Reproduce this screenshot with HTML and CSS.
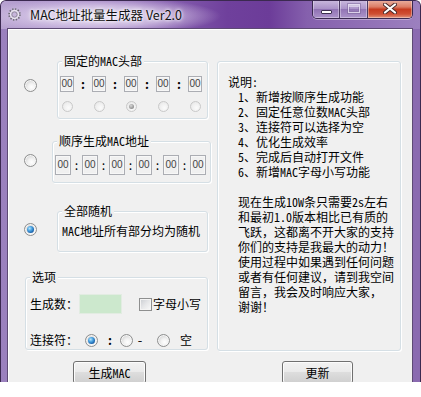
FILE: index.html
```html
<!DOCTYPE html>
<html lang="zh-CN">
<head>
<meta charset="utf-8">
<title>MAC地址批量生成器 Ver2.0</title>
<link rel="stylesheet" href="styles.css">
</head>
<body>
<div class="window">
  <div class="titlebar">
    <svg class="app-icon" width="13" height="13" viewBox="0 0 13 13">
      <circle cx="6.5" cy="6.5" r="5.2" fill="none" stroke="#6c6c72" stroke-width="2.2" stroke-dasharray="1.3 1.4"/>
      <circle cx="6.5" cy="6.5" r="4" fill="none" stroke="#e9e6ee" stroke-width="1.4"/>
      <circle cx="6.5" cy="6.5" r="2.6" fill="none" stroke="#8a8790" stroke-width="0.8"/>
    </svg>
    <span class="title">MAC地址批量生成器 Ver2.0</span>
    <div class="caption">
      <span class="cbtn cmin"><i></i></span>
      <span class="cbtn cmax"><i></i></span>
      <span class="cbtn cclose">
        <svg width="14" height="11" viewBox="0 0 14 11">
          <path d="M2 1.5 L12 9.5 M12 1.5 L2 9.5" stroke="#4a2a2a" stroke-width="4" stroke-linecap="round"/>
          <path d="M2 1.5 L12 9.5 M12 1.5 L2 9.5" stroke="#ffffff" stroke-width="2.2" stroke-linecap="round"/>
        </svg>
      </span>
    </div>
  </div>
  <div class="client">
    <div class="col-left">
      <div class="opt-row r1">
        <span class="radio"></span>
        <div class="grp g1">
          <span class="legend">固定的MAC头部</span>
          <div class="hex5">
            <div class="cell"><span class="box">00</span><span class="mini"></span></div>
            <span class="colon">:</span>
            <div class="cell"><span class="box">00</span><span class="mini"></span></div>
            <span class="colon">:</span>
            <div class="cell"><span class="box">00</span><span class="mini on"></span></div>
            <span class="colon">:</span>
            <div class="cell"><span class="box">00</span><span class="mini"></span></div>
            <span class="colon">:</span>
            <div class="cell"><span class="box">00</span><span class="mini"></span></div>
          </div>
        </div>
      </div>
      <div class="opt-row r2">
        <span class="radio"></span>
        <div class="grp g2">
          <span class="legend">顺序生成MAC地址</span>
          <div class="hex6">
            <span class="box">00</span><span class="colon">:</span>
            <span class="box">00</span><span class="colon">:</span>
            <span class="box">00</span><span class="colon">:</span>
            <span class="box">00</span><span class="colon">:</span>
            <span class="box">00</span><span class="colon">:</span>
            <span class="box">00</span>
          </div>
        </div>
      </div>
      <div class="opt-row r3">
        <span class="radio checked"></span>
        <div class="grp g3">
          <span class="legend">全部随机</span>
          <p class="g3-text">MAC地址所有部分均为随机</p>
        </div>
      </div>
      <div class="grp g4">
        <span class="legend">选项</span>
        <div class="form-row1">
          <span>生成数：</span>
          <span class="count-input"></span>
          <span class="checkbox"></span>
          <span class="cb-label">字母小写</span>
        </div>
        <div class="form-row2">
          <span>连接符：</span>
          <span class="radio checked sep-r1"></span>
          <span class="sep-colon">:</span>
          <span class="radio sep-r2"></span>
          <span class="sep-dash">-</span>
          <span class="radio sep-r3"></span>
          <span class="sep-empty">空</span>
        </div>
      </div>
    </div>
    <div class="grp desc">
      <div>说明:</div>
      <div class="ind">1、新增按顺序生成功能</div>
      <div class="ind">2、固定任意位数MAC头部</div>
      <div class="ind">3、连接符可以选择为空</div>
      <div class="ind">4、优化生成效率</div>
      <div class="ind">5、完成后自动打开文件</div>
      <div class="ind">6、新增MAC字母小写功能</div>
      <div class="blank"></div>
      <div class="ind">现在生成10W条只需要2s左右</div>
      <div class="ind">和最初1.0版本相比已有质的</div>
      <div class="ind">飞跃，这都离不开大家的支持</div>
      <div class="ind">你们的支持是我最大的动力！</div>
      <div class="ind">使用过程中如果遇到任何问题</div>
      <div class="ind">或者有任何建议，请到我空间</div>
      <div class="ind">留言，我会及时响应大家，</div>
      <div class="ind">谢谢！</div>
    </div>
    <div><button class="btn btn-mac">生成MAC</button></div>
    <div><button class="btn btn-upd">更新</button></div>
  </div>
</div>
</body>
</html>
```
FILE: styles.css
```css
body {
  margin: 0;
  background: #ffffff;
  font-family: "Noto Sans Mono CJK SC", "Noto Sans CJK SC", sans-serif;
  font-size: 12px;
  color: #000;
}

.window {
  width: 421px;
  height: 382px;
  box-sizing: border-box;
  border: 1px solid #3b2950;
  border-bottom: 0;
  border-radius: 6px 6px 0 0;
  padding: 0 8px 0 7px;
  background: linear-gradient(90deg, #9b81be 0%, #8c6bb3 50%, #8a6ab0 100%);
  display: flex;
  flex-direction: column;
  overflow: hidden;
}

.titlebar {
  height: 28px;
  flex: none;
  margin: 0 -8px 0 -7px;
  padding: 0 8px 0 7px;
  display: flex;
  align-items: flex-start;
  background:
    radial-gradient(ellipse 120px 19px at 100px 15px, rgba(240, 233, 248, 0.95) 0%, rgba(228, 216, 240, 0.65) 55%, rgba(228, 216, 240, 0) 100%),
    linear-gradient(90deg, #b8a3d1 0%, #a68ac7 16%, #8862b1 38%, #6f409c 54%, #6c3c99 64%, #8560ad 73%, #9c80bf 100%);
}

.app-icon {
  flex: none;
  margin-top: 7px;
}

.title {
  margin: 6px 0 0 9px;
  line-height: 16px;
  font-family: "Noto Sans CJK SC", sans-serif;
  font-size: 12.5px;
  color: #111;
  text-shadow: 0 0 5px #fff, 0 0 3px #fff;
}

.caption {
  margin: -1px -1px 0 auto;
  display: flex;
  height: 19px;
  box-sizing: border-box;
  border: 1px solid #3a2950;
  border-top: 0;
  border-radius: 0 0 5px 5px;
  overflow: hidden;
  box-shadow: 0 1px 0 rgba(255, 255, 255, 0.35);
}

.cbtn {
  display: flex;
  align-items: center;
  justify-content: center;
  height: 100%;
  box-shadow: inset 0 0 0 1px rgba(255, 255, 255, 0.35);
}

.cmin, .cmax {
  width: 26px;
  border-right: 1px solid #4b3a62;
  background: linear-gradient(180deg, rgba(225, 215, 238, 0.75) 0%, rgba(190, 172, 214, 0.6) 50%, rgba(150, 125, 182, 0.55) 52%, rgba(185, 165, 212, 0.7) 100%);
}

.cmax {
  width: 27px;
}

.cmin i {
  display: block;
  width: 9px;
  height: 2px;
  margin-top: 6px;
  background: #fff;
  border: 1px solid #3d3050;
  border-radius: 1px;
}

.cmax i {
  display: block;
  width: 10px;
  height: 7px;
  margin-top: -1px;
  border: 1px solid rgba(240, 235, 248, 0.75);
  box-shadow: 0 0 0 1px rgba(120, 100, 150, 0.5), inset 0 2px 0 rgba(240, 235, 248, 0.6), inset 0 0 0 1px rgba(120, 100, 150, 0.4);
}

.cclose {
  width: 44px;
  background: linear-gradient(180deg, #eab2a3 0%, #dc7d66 38%, #c63b20 52%, #cf4f33 78%, #e1937c 100%);
}

.cclose svg {
  margin-top: -1px;
}

.client {
  flex: 1;
  background: #f0f0f0;
  display: grid;
  grid-template-columns: 204px 200px;
  grid-template-rows: auto 1fr;
  align-items: start;
  box-shadow: 0 0 0 1px #5d4a74, inset 1px 1px 0 #ffffff;
}

.col-left {
  display: flex;
  flex-direction: column;
}

.opt-row {
  display: flex;
  align-items: flex-start;
}

.radio {
  flex: none;
  position: relative;
  display: inline-block;
  width: 13px;
  height: 13px;
  box-sizing: border-box;
  border-radius: 50%;
  border: 1px solid #8e8f8f;
  background: radial-gradient(circle at 60% 65%, #ffffff 0%, #f2f2f2 35%, #d4d4d4 75%, #c4c4c4 100%);
  box-shadow: inset 0 0 0 1px #f6f6f6;
}

.radio.checked::after {
  content: "";
  position: absolute;
  left: 2px;
  top: 2px;
  width: 7px;
  height: 7px;
  border-radius: 50%;
  background: radial-gradient(circle at 38% 35%, #b9e6fb 0%, #4ea5e2 35%, #1b64ad 70%, #0e3c74 100%);
}

.r1 { margin-top: 32px; }
.r1 .radio { margin: 18px 0 0 16px; }
.r2 { margin-top: 22px; }
.r2 .radio { margin: 13px 0 0 16px; }
.r3 { margin-top: 28px; }
.r3 .radio { margin: 12px 0 0 16px; }

.grp {
  flex: none;
  box-sizing: border-box;
  border: 1px solid #d5dfe5;
  border-radius: 3px;
  box-shadow: inset 1px 1px 0 #ffffff, 1px 1px 0 #ffffff;
}

.legend {
  display: block;
  width: max-content;
  margin: -8px 0 0 4px;
  padding: 0 2px;
  line-height: 14px;
  background: #f0f0f0;
}

.g1 { margin-left: 20px; width: 151px; height: 58px; }
.g2 { margin-left: 15px; width: 159px; height: 42px; }
.g3 { margin-left: 20px; width: 151px; height: 41px; }
.g4 { margin: 25px 0 0 17px; width: 183px; height: 73px; }

.box {
  display: block;
  box-sizing: border-box;
  border: 1px solid #abadb3;
  box-shadow: inset 0 0 0 1px #f7f7f7;
  background: #f0f0f0;
  font-family: "Liberation Sans", sans-serif;
  font-size: 10px;
  color: #444;
  text-align: center;
}

.hex5 {
  display: flex;
  margin: 8px 0 0 2px;
}

.hex5 .cell {
  width: 14px;
  display: flex;
  flex-direction: column;
  align-items: center;
}

.hex5 .box {
  width: 14px;
  height: 16px;
  line-height: 14px;
}

.hex5 .colon {
  width: 18px;
  text-align: center;
  line-height: 16px;
  font-weight: bold;
}

.mini {
  position: relative;
  display: block;
  width: 11px;
  height: 11px;
  margin-top: 9px;
  box-sizing: border-box;
  border-radius: 50%;
  border: 1px solid #c9c9c9;
  background: radial-gradient(circle at 60% 65%, #fbfbfb 0%, #eeeeee 60%, #e0e0e0 100%);
}

.mini.on::after {
  content: "";
  position: absolute;
  left: 2px;
  top: 2px;
  width: 5px;
  height: 5px;
  border-radius: 50%;
  background: radial-gradient(circle at 40% 35%, #d8d8d8 0%, #9a9a9a 60%, #7a7a7a 100%);
}

.hex6 {
  display: flex;
  margin: 7px 0 0 2px;
}

.hex6 .box {
  width: 16px;
  height: 20px;
  line-height: 18px;
  flex: none;
}

.hex6 .colon {
  width: 11px;
  text-align: center;
  line-height: 20px;
}

.g3-text {
  margin: 6px 0 0 4px;
  line-height: 14px;
}

.form-row1 {
  display: flex;
  align-items: center;
  height: 20px;
  margin: 10px 0 0 4px;
  line-height: 14px;
}

.count-input {
  width: 43px;
  height: 20px;
  margin-left: 1px;
  box-sizing: border-box;
  border: 1px solid #e2ece2;
  background: #cce8cd;
}

.checkbox {
  width: 13px;
  height: 13px;
  margin-left: 17px;
  box-sizing: border-box;
  border: 1px solid #8e8f8f;
  background: linear-gradient(135deg, #c9ccd1 0%, #e6e7e9 50%, #fafafa 100%);
  box-shadow: inset 0 0 0 1px #f4f4f4;
}

.cb-label {
  margin-left: 1px;
}

.form-row2 {
  display: flex;
  align-items: center;
  height: 14px;
  margin: 19px 0 0 4px;
  line-height: 14px;
}

.sep-r1 { margin-left: 7px; }
.sep-colon { margin-left: 9px; font-weight: bold; }
.sep-r2 { margin-left: 7px; }
.sep-dash { margin-left: 4px; }
.sep-r3 { margin-left: 14px; }
.sep-empty { margin-left: 10px; }

.desc {
  margin: 32px 0 0 5px;
  width: 184px;
  height: 290px;
  padding: 12px 0 0 10px;
  line-height: 15px;
  white-space: nowrap;
}

.desc .ind {
  padding-left: 10px;
}

.desc .blank {
  height: 15px;
}

.btn {
  display: block;
  box-sizing: border-box;
  height: 23px;
  padding: 0;
  border: 1px solid #707070;
  border-radius: 3px;
  background: linear-gradient(180deg, #f2f2f2 0%, #ebebeb 45%, #dddddd 50%, #cfcfcf 100%);
  box-shadow: inset 0 0 0 1px #fcfcfc;
  font: inherit;
  line-height: 18px;
  color: #000;
  text-align: center;
}

.btn-mac {
  width: 73px;
  margin: 10px 0 0 65px;
}

.btn-upd {
  width: 71px;
  margin: 10px 0 0 70px;
}
```
